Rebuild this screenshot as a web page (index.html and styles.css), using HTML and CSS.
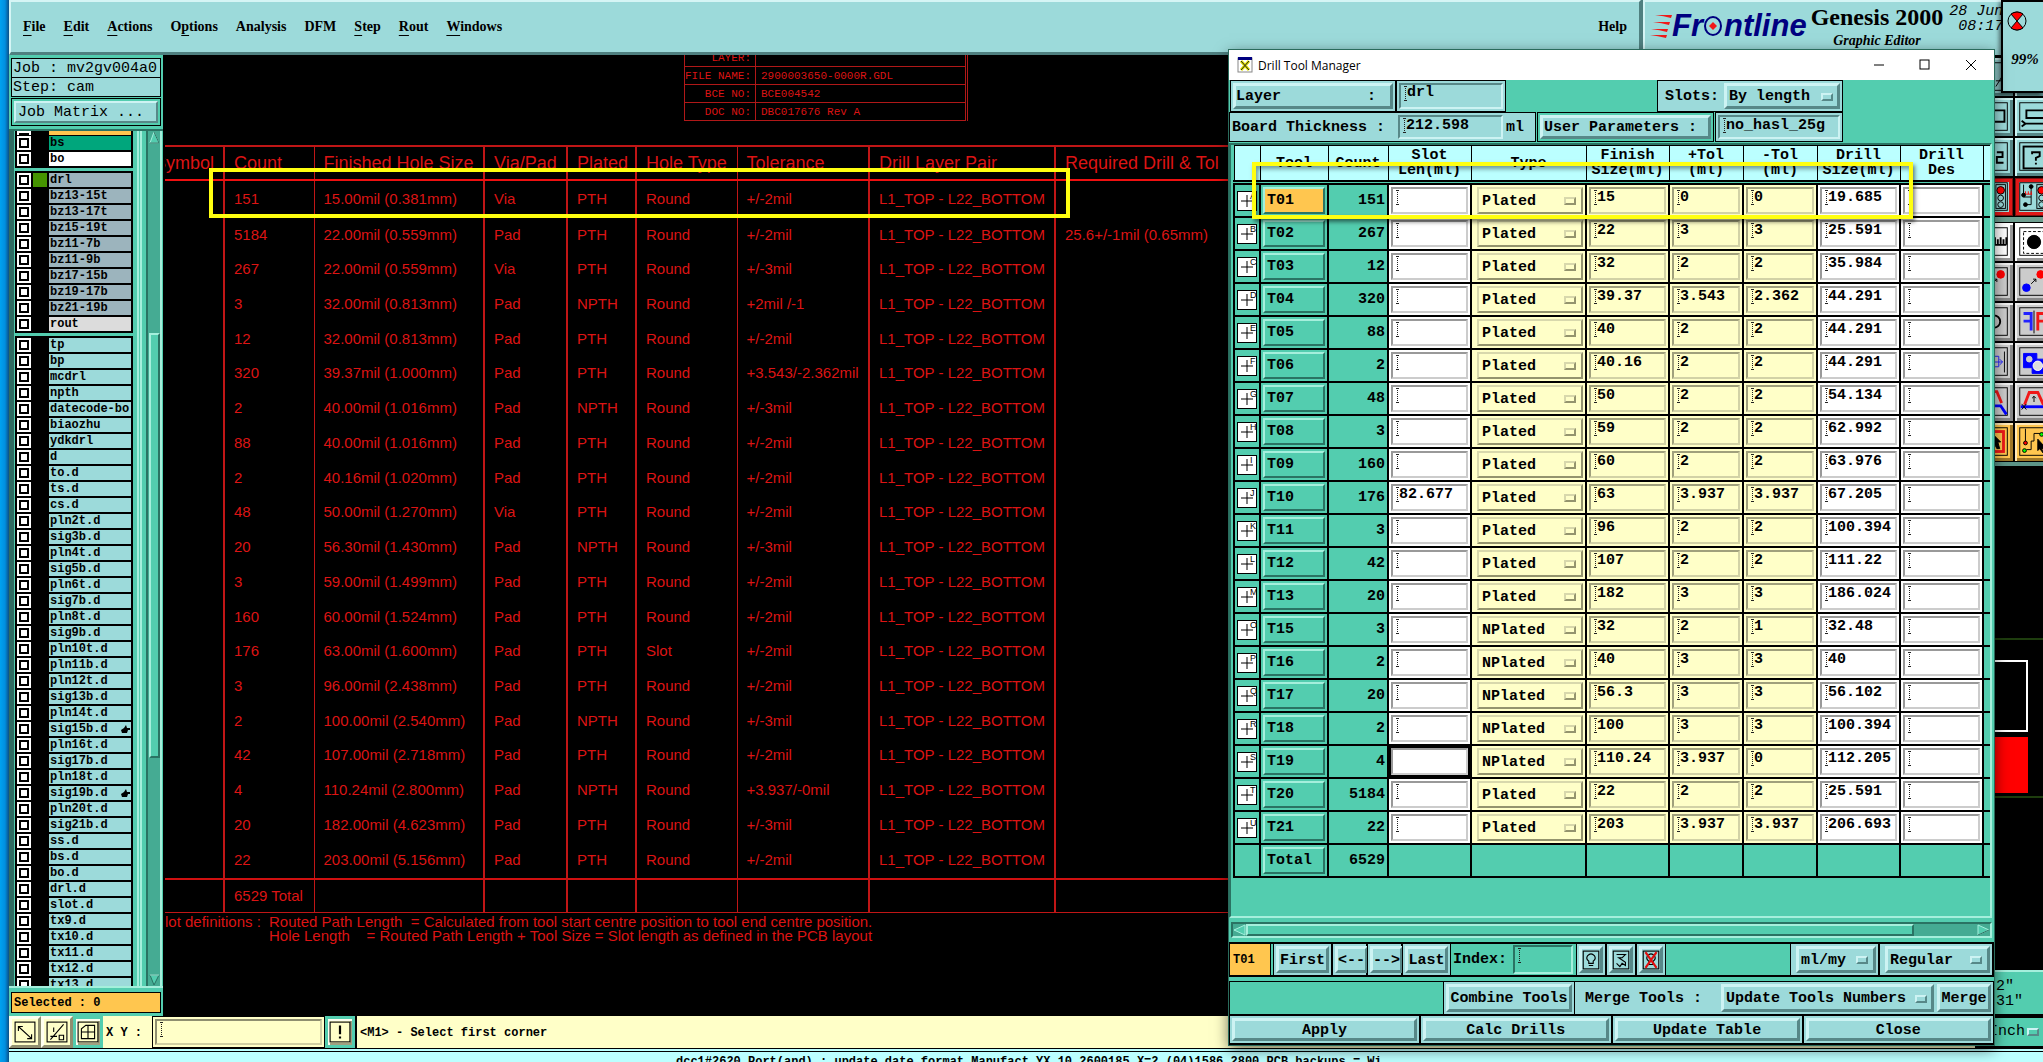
FILE: index.html
```html
<!DOCTYPE html>
<html lang="en">

<head>
    <meta charset="UTF-8">
    <meta name="viewport" content="width=device-width, initial-scale=1.0">
    <title>Genesis 2000 Graphic Editor</title>
    <link rel="stylesheet" href="styles.css">
</head>

<body>
    <div class="app">
        <header class="topbar">
            <nav class="menubar">
                <a href="#"><u>F</u>ile</a>
                <a href="#"><u>E</u>dit</a>
                <a href="#"><u>A</u>ctions</a>
                <a href="#">O<u>p</u>tions</a>
                <a href="#">Analysis</a>
                <a href="#">DFM</a>
                <a href="#"><u>S</u>tep</a>
                <a href="#"><u>R</u>out</a>
                <a href="#"><u>W</u>indows</a>
                <a href="#" class="help">Help</a>
            </nav>
            <div class="brand">
                <div class="logo">
                    <svg class="logo-stripes" width="22" height="24" viewBox="0 0 22 24">
                        <path d="M5 1H22L21 4Q14 2 5 1ZM3 8H20L19 11Q12 9 3 8ZM1 15H18L17 18Q10 16 1 15ZM0 21H17L16 24Q8 22 0 21Z" fill="#f01818" />
                    </svg>
                    <span>Fr</span>
                    <svg class="logo-o" width="21" height="22" viewBox="0 0 21 22">
                        <ellipse cx="10" cy="11" rx="8" ry="9" fill="none" stroke="#000080" stroke-width="2" />
                        <path d="M10 7L14 11L10 15L6 11Z" fill="#f01818" />
                    </svg>
                    <span>ntline</span>
                </div>
                <div class="product">
                    <strong>Genesis 2000</strong>
                    <em>Graphic Editor</em>
                </div>
                <div class="clock">28 Jun<br>08:17</div>
            </div>
        </header>

        <main class="workspace">
            <aside class="sidebar">
                <div class="job-info">Job : mv2gv004a0</div>
                <div class="job-info">Step: cam</div>
                <div class="matrix-box"><button type="button" class="btn">Job Matrix ...</button></div>
                <div class="layers">
                    <div class="layer-list" id="layerList"></div>
                    <div class="vscroll">
                        <svg width="11" height="13" viewBox="0 0 11 13"><path d="M5 1L10 12H1Z" fill="#53cdaf" stroke="#a5efdc" /><path d="M5 1L10 12H1" fill="none" stroke="#2a7363" /></svg>
                        <div class="vthumb"></div>
                        <svg width="11" height="12" viewBox="0 0 11 12"><path d="M1 1H10L5 11Z" fill="#53cdaf" stroke="#2a7363" /><path d="M1 1H10" stroke="#a5efdc" /></svg>
                    </div>
                </div>
                <div class="selected">Selected : 0</div>
            </aside>

            <section class="canvas">
                <table class="title-block">
                    <tr><th>LAYER:</th><td></td></tr>
                    <tr><th>FILE NAME:</th><td>2900003650-0000R.GDL</td></tr>
                    <tr><th>BCE NO:</th><td>BCE004542</td></tr>
                    <tr><th>DOC NO:</th><td>DBC017676 Rev A</td></tr>
                </table>

                <table class="drawing">
                    <colgroup>
                        <col class="c-sym"><col class="c-count"><col class="c-hole"><col class="c-via"><col class="c-plated">
                        <col class="c-type"><col class="c-tol"><col class="c-pair"><col>
                    </colgroup>
                    <thead>
                        <tr>
                            <th>Symbol</th><th>Count</th><th>Finished Hole Size</th><th>Via/Pad</th><th>Plated</th>
                            <th>Hole Type</th><th>Tolerance</th><th>Drill Layer Pair</th><th>Required Drill &amp; Tol</th>
                        </tr>
                    </thead>
                    <tbody id="drawingRows"></tbody>
                    <tfoot>
                        <tr><td></td><td>6529 Total</td><td></td><td></td><td></td><td></td><td></td><td></td><td></td></tr>
                    </tfoot>
                </table>
                <dl class="notes">
                    <dt>Slot definitions :</dt>
                    <dd>Routed Path Length &nbsp;= Calculated from tool start centre position to tool end centre position.</dd>
                    <dt></dt>
                    <dd>Hole Length &nbsp; &nbsp;= Routed Path Length + Tool Size = Slot length as defined in the PCB layout</dd>
                </dl>
                <div class="highlight highlight-drawing"></div>
            </section>

            <aside class="tools-col">
                <div class="tiles">
                    <button type="button" class="tile" aria-label="Zoom in"><svg viewBox="0 0 40 40"><rect x="5" y="5" width="29" height="29" /><path d="M22 30L33 12M22 24H33" /></svg></button>
                    <button type="button" class="tile" aria-label="Zoom out"><svg viewBox="0 0 40 40"><rect x="5" y="5" width="29" height="29" /></svg></button>
                    <button type="button" class="tile" aria-label="Area"><svg viewBox="0 0 40 40"><rect x="5" y="5" width="29" height="29" /><path d="M12 13H31V25H12Z" stroke-width="2" /></svg></button>
                    <button type="button" class="tile" aria-label="Path"><svg viewBox="0 0 40 40"><rect x="5" y="5" width="35" height="29" /><path d="M40 13H12V21H40M40 27H11M7 24L11 27L7 30" stroke-width="2" /></svg></button>
                    <button type="button" class="tile" aria-label="Two"><svg viewBox="0 0 40 40"><rect x="5" y="5" width="29" height="29" /><path d="M23 15H29V20H23V26H30" stroke-width="2" /></svg></button>
                    <button type="button" class="tile" aria-label="Query"><svg viewBox="0 0 40 40"><rect x="5" y="5" width="35" height="29" /><rect x="9" y="9" width="31" height="23" stroke-width="2" /><path d="M18 17V15H26V19L22 21V24M22 26V28" stroke-width="2" /></svg></button>
                    <button type="button" class="tile tile-red" aria-label="Signal"><svg viewBox="0 0 40 40"><rect x="5" y="5" width="29" height="29" /><rect x="22" y="7" width="10" height="25" /><circle cx="27" cy="13" r="4" fill="#f00" /><circle cx="27" cy="21" r="3" /><circle cx="27" cy="28" r="3" /></svg></button>
                    <button type="button" class="tile tile-red" aria-label="Net signal"><svg viewBox="0 0 40 40"><rect x="5" y="5" width="35" height="29" /><rect x="23" y="7" width="10" height="25" /><circle cx="28" cy="13" r="4" fill="#f00" /><circle cx="28" cy="21" r="3" /><circle cx="28" cy="28" r="3" /><path d="M9 7V17M17 10V28H12M17 20H9" /><path d="M11 17V14M14 17V14M17 17V14M11 17H18" stroke="#f00" /><circle cx="9" cy="18" r="2" fill="#000" /><circle cx="17" cy="9" r="2" fill="#000" /><circle cx="11" cy="28" r="2" fill="#000" /></svg></button>
                </div>
                <div class="tiles tiles-edit">
                    <button type="button" class="tile tile-white" aria-label="Ruler"><svg viewBox="0 0 40 40"><rect x="5" y="5" width="29" height="29" /><path d="M20 23H33M21 15V23M24 17V23M27 15V23M30 17V23M33 15V23" stroke-width="2" /></svg></button>
                    <button type="button" class="tile tile-white" aria-label="Pad"><svg viewBox="0 0 40 40"><rect x="5" y="5" width="35" height="29" /><rect x="9" y="9" width="24" height="23" stroke-dasharray="3 2" /><circle cx="20" cy="20" r="7" fill="#000" /></svg></button>
                    <button type="button" class="tile tile-grey" aria-label="Move"><svg viewBox="0 0 40 40"><rect x="5" y="5" width="29" height="29" /><circle cx="27" cy="12" r="4" fill="#f00" stroke="#f00" /><path d="M18 22L23 17M20 17H23V20" /></svg></button>
                    <button type="button" class="tile tile-grey" aria-label="Copy"><svg viewBox="0 0 40 40"><rect x="5" y="5" width="35" height="29" /><circle cx="12" cy="26" r="4" fill="#00f" stroke="#00f" /><circle cx="27" cy="12" r="4" fill="#f00" stroke="#f00" /><path d="M17 22L22 17M19 17H22V20" /></svg></button>
                    <button type="button" class="tile tile-grey" aria-label="Rotate"><svg viewBox="0 0 40 40"><rect x="5" y="5" width="29" height="29" /><path d="M20 13A6 6 0 0 1 20 26" stroke-width="2" /></svg></button>
                    <button type="button" class="tile tile-grey" aria-label="Mirror"><svg viewBox="0 0 40 40"><rect x="5" y="5" width="35" height="29" /><path d="M9 11H17V29M9 19H17" stroke="#22f" stroke-width="3" /><path d="M20 8V32" /><path d="M24 29V11H33V19H24" stroke="#f01818" stroke-width="3" /></svg></button>
                    <button type="button" class="tile tile-grey" aria-label="Stretch"><svg viewBox="0 0 40 40"><rect x="5" y="5" width="29" height="29" /><path d="M14 14H25V25H14ZM20 20H29M26 17L29 20L26 23" stroke="#22f" /><path d="M31 9V31" /></svg></button>
                    <button type="button" class="tile tile-grey" aria-label="Merge"><svg viewBox="0 0 40 40"><rect x="5" y="5" width="35" height="29" /><path d="M9 11H23V17H34V32H18V26H9Z" fill="#00f" stroke="#00f" /><circle cx="15" cy="17" r="3" fill="#ccc" stroke="#ccc" /><circle cx="24" cy="24" r="5" fill="#ddd" stroke="#fff" /></svg></button>
                    <button type="button" class="tile tile-grey" aria-label="Reshape"><svg viewBox="0 0 40 40"><rect x="5" y="5" width="29" height="29" /><path d="M14 25L19 9H23L28 21" stroke="#f01818" stroke-width="3" /><path d="M10 24H27L33 33" stroke="#00f" stroke-width="3" /></svg></button>
                    <button type="button" class="tile tile-grey" aria-label="Slide line"><svg viewBox="0 0 40 40"><rect x="5" y="5" width="35" height="29" /><path d="M10 23L15 10H24L30 23" stroke="#f01818" stroke-width="3" /><path d="M6 25H36" stroke="#00f" stroke-width="3" /><path d="M20 20V14M18 16L20 14L22 16M7 22L12 28M12 22L7 28" /></svg></button>
                    <button type="button" class="tile tile-orange" aria-label="Select area"><svg viewBox="0 0 40 40"><rect x="5" y="5" width="29" height="29" /><rect x="10" y="9" width="20" height="21" stroke="#f01818" stroke-width="3" /><path d="M20 13L27 20H24L26 27H23L20 21Z" fill="#000" /></svg></button>
                    <button type="button" class="tile tile-orange" aria-label="Select net"><svg viewBox="0 0 40 40"><rect x="5" y="5" width="35" height="29" /><path d="M11 6V20M12 28H17V19H20V11H27" /><circle cx="11" cy="21" r="2" fill="#f00" /><circle cx="10" cy="29" r="2" fill="#0f0" /><circle cx="28" cy="12" r="2" fill="#0f0" /><path d="M24 17L33 27H28L30 32L26 27L24 29Z" fill="#000" /></svg></button>
                </div>
                <div class="overview">
                    <svg width="80" height="160" viewBox="0 0 80 160">
                        <path d="M0 1H80M0 159H80" stroke="#3c7a1c" />
                        <rect x="-4" y="23" width="57" height="70" fill="none" stroke="#fff" stroke-width="2" />
                        <rect x="0" y="99" width="54" height="56" fill="#f00" />
                    </svg>
                </div>
                <div class="coords">2"<br>31"</div>
            </aside>
        </main>

        <footer class="command">
            <button type="button" class="cmd-tile" aria-label="Absolute"><svg viewBox="0 0 20 20"><rect x="1" y="1" width="18" height="18" /><path d="M4 5L16 16M4 9V5H8M12 16H16V12" /></svg></button>
            <button type="button" class="cmd-tile" aria-label="Angle"><svg viewBox="0 0 20 20"><rect x="1" y="1" width="18" height="18" /><path d="M4 17L16 3M4 14H10M7 6V10M12 13V17H16V13Z" /></svg></button>
            <button type="button" class="cmd-tile cmd-on" aria-label="Grid"><svg viewBox="0 0 20 20"><rect x="1" y="1" width="18" height="18" /><path d="M4 16V7L8 4H16V16ZM4 10H16M10 4V16" /></svg></button>
            <label class="xy" for="xy">X Y :</label>
            <div class="xy-box"><input class="field" id="xy" type="text"></div>
            <button type="button" class="cmd-tile cmd-on" aria-label="Alert"><svg viewBox="0 0 20 20"><rect x="1" y="1" width="18" height="18" /><path d="M10 4V12M10 14V16" stroke-width="2" /></svg></button>
            <div class="message">&lt;M1&gt; - Select first corner</div>
            <label class="units"><select aria-label="Units"><option>Inch</option></select><i class="knob"></i></label>
        </footer>
        <div class="statusline">dcc1#2620 Port(and) : update date format Manufact YX 10.2600185 X=2.(04)1586.2800 PCB backups = Wi</div>
    </div>

    <div class="meter">
        <svg width="20" height="20" viewBox="0 0 20 20"><circle cx="10" cy="10" r="9" fill="none" stroke="#000" /><path d="M10 10L4 3Q10 -1 16 3ZM10 10L4 17Q10 21 16 17Z" fill="#f00" stroke="#000" /></svg>
        <span>99%</span>
    </div>

    <div class="dialog" role="dialog" aria-labelledby="dlgTitle">
        <div class="titlebar">
            <svg width="16" height="16" viewBox="0 0 16 16"><rect x="1" y="1" width="14" height="14" fill="#fff" stroke="#888" /><rect x="1" y="0" width="14" height="3" fill="#000080" /><path d="M4 4L12 13M12 4L4 13" stroke="#e0e000" stroke-width="3" /><path d="M4 4L12 13M12 4L4 13" stroke="#222" /></svg>
            <span id="dlgTitle">Drill Tool Manager</span>
            <button type="button" aria-label="Minimize"><svg width="12" height="12" viewBox="0 0 12 12"><path d="M1 6H11" /></svg></button>
            <button type="button" aria-label="Maximize"><svg width="12" height="12" viewBox="0 0 12 12"><rect x="1" y="1" width="9" height="9" /></svg></button>
            <button type="button" aria-label="Close window"><svg width="12" height="12" viewBox="0 0 12 12"><path d="M1 1L11 11M11 1L1 11" /></svg></button>
        </div>

        <div class="params">
            <div class="cell layer-btn"><button type="button" class="btn spread"><span>Layer</span><span>:</span></button></div>
            <div class="cell layer-field"><input class="field" type="text" value="drl" aria-label="Layer"></div>
            <div class="cell slots"><label for="slots">Slots:</label>
                <span class="option"><select id="slots"><option>By length</option></select><i class="knob"></i></span>
            </div>
        </div>
        <div class="params params-2">
            <div class="cell thickness"><label for="thick">Board Thickness :</label><input class="field" id="thick" type="text" value="212.598"><span>ml</span></div>
            <div class="cell user-btn"><button type="button" class="btn">User Parameters :</button></div>
            <div class="cell user-field"><input class="field" type="text" value="no_hasl_25g" aria-label="User parameters"></div>
        </div>

        <div class="tool-frame">
            <table class="tool-table">
                <colgroup>
                    <col class="t-ico"><col class="t-tool"><col class="t-count"><col class="t-w"><col class="t-type">
                    <col class="t-w"><col class="t-n"><col class="t-n"><col class="t-w"><col class="t-w"><col>
                </colgroup>
                <thead>
                    <tr>
                        <th></th><th>Tool</th><th>Count</th><th>Slot<br>Len(ml)</th><th>Type</th><th>Finish<br>Size(ml)</th>
                        <th>+Tol<br>(ml)</th><th>-Tol<br>(ml)</th><th>Drill<br>Size(ml)</th><th>Drill<br>Des</th><th></th>
                    </tr>
                </thead>
                <tbody id="toolRows"></tbody>
                <tfoot>
                    <tr>
                        <td></td><td><button type="button" class="tool-btn">Total</button></td><td class="num">6529</td>
                        <td></td><td></td><td></td><td></td><td></td><td></td><td></td><td></td>
                    </tr>
                </tfoot>
            </table>
        </div>
        <div class="hscroll">
            <svg width="13" height="12" viewBox="0 0 13 12"><path d="M1 6L12 1V11Z" fill="#53cdaf" stroke="#a5efdc" /></svg>
            <div class="hthumb"></div>
            <svg width="13" height="12" viewBox="0 0 13 12"><path d="M12 6L1 1V11Z" fill="#53cdaf" stroke="#a5efdc" /><path d="M12 6L1 11" stroke="#2a7363" /></svg>
        </div>

        <div class="nav-row">
            <div class="current">T01</div>
            <div class="cell w-first"><button type="button" class="btn">First</button></div>
            <div class="cell w-arrow"><button type="button" class="btn">&lt;--</button></div>
            <div class="cell w-arrow"><button type="button" class="btn">--&gt;</button></div>
            <div class="cell w-last"><button type="button" class="btn">Last</button></div>
            <label for="index">Index:</label><input class="field index" id="index" type="text">
            <div class="cell w-icon"><button type="button" class="btn" aria-label="Highlight"><svg viewBox="0 0 16 18"><rect x="1" y="1" width="14" height="16" /><path d="M6 12V10Q3 8 5 5Q8 2 11 5Q13 8 10 10V12ZM6 14H10" /></svg></button></div>
            <div class="cell w-icon"><button type="button" class="btn" aria-label="Path"><svg viewBox="0 0 16 18"><rect x="1" y="1" width="14" height="16" /><path d="M4 4H12L9 7H6L12 11V14L9 12L7 15L4 12" /></svg></button></div>
            <div class="cell w-icon"><button type="button" class="btn" aria-label="Clear highlight"><svg viewBox="0 0 16 18"><rect x="1" y="1" width="14" height="16" /><path d="M6 13V10Q3 8 5 5Q8 2 11 5Q13 8 10 10V13Z" /><path d="M3 2L13 16M13 2L3 16" stroke="#e01010" stroke-width="2" /></svg></button></div>
            <div class="cell unit-opt"><span class="option"><select aria-label="Tool units"><option>ml/my</option></select><i class="knob"></i></span></div>
            <div class="cell mode-opt"><span class="option"><select aria-label="Mode"><option>Regular</option></select><i class="knob"></i></span></div>
        </div>
        <div class="merge-row">
            <div class="cell combine"><button type="button" class="btn">Combine Tools</button></div>
            <div class="cell merge"><label for="merge">Merge Tools :</label>
                <span class="option"><select id="merge"><option>Update Tools Numbers</option></select><i class="knob"></i></span>
                <button type="button" class="btn">Merge</button>
            </div>
        </div>
        <div class="action-row">
            <div class="cell"><button type="button" class="btn">Apply</button></div>
            <div class="cell"><button type="button" class="btn">Calc Drills</button></div>
            <div class="cell"><button type="button" class="btn">Update Table</button></div>
            <div class="cell"><button type="button" class="btn">Close</button></div>
        </div>
        <div class="highlight highlight-tool"></div>
    </div>

    <script src="script.js"></script>
</body>

</html>
```
FILE: styles.css
```css
* {
    box-sizing: border-box;
}

html,
body {
    height: 100%;
    margin: 0;
}

body {
    position: relative;
    overflow: hidden;
    padding-left: 9px;
    background: linear-gradient(90deg, #00a2f0 0, #008fe0 5px, #0b4f86 9px);
    font-family: "Liberation Mono", monospace;
    font-size: 15px;
    font-weight: bold;
    color: #000;
}

button,
input,
select {
    margin: 0;
    padding: 0;
    border: 0;
    border-radius: 0;
    outline: 0;
    background: none;
    font: inherit;
    color: inherit;
}

select {
    appearance: none;
    flex: 1;
    min-width: 0;
}

.app {
    display: flex;
    flex-direction: column;
    height: 100%;
    overflow: hidden;
    background: #000;
}

/* top bar */
.topbar {
    display: flex;
    height: 55px;
    background: #4f8080;
}

.menubar {
    flex: 1;
    display: flex;
    align-items: center;
    gap: 18px;
    padding: 0 12px;
    border: 2px solid;
    border-color: #d5f5f5 #4f8080 #4f8080 #d5f5f5;
    border-bottom-width: 3px;
    background: #9cdada;
}

.menubar a {
    color: #000;
    text-decoration: none;
    font-family: "Liberation Serif", serif;
    font-size: 14px;
}

.menubar u {
    text-underline-offset: 4px;
}

.menubar .help {
    margin-left: auto;
}

.brand {
    display: flex;
    width: 400px;
    padding: 2px 0 0 5px;
    gap: 4px;
    margin-left: 2px;
    border-left: 2px solid #d5f5f5;
    border-top: 2px solid #d5f5f5;
    background: #9cdada;
    white-space: nowrap;
}

.logo {
    display: flex;
    align-items: center;
    height: 44px;
    color: #000080;
    font: italic bold 31px "Liberation Sans", sans-serif;
}

.product {
    display: flex;
    flex-direction: column;
    align-items: center;
    font-family: "Liberation Serif", serif;
}

.product strong {
    font-size: 24px;
    line-height: 26px;
}

.product em {
    font-size: 14px;
    line-height: 22px;
}

.clock {
    margin-left: 2px;
    font-style: italic;
    font-weight: normal;
    line-height: 15px;
    text-align: right;
}

.meter {
    position: absolute;
    top: 0;
    right: 0;
    width: 42px;
    height: 93px;
    display: flex;
    flex-direction: column;
    align-items: center;
    gap: 20px;
    padding: 9px 12px 0 0;
    border: solid #000;
    border-width: 2px 0 2px 2px;
    background: #9cdada;
    box-shadow: -2px 2px 4px rgba(0, 0, 0, 0.5);
    font: italic bold 15px "Liberation Serif", serif;
}

.meter span {
    margin-left: 16px;
}

/* bevelled controls */
.btn,
.option {
    display: flex;
    align-items: center;
    justify-content: center;
    padding-top: 1px;
    border: 3px solid;
    border-color: #cdf3f3 #578888 #578888 #cdf3f3;
    background: #9cdada;
    white-space: nowrap;
}

.btn svg {
    width: 18px;
    height: 20px;
    fill: none;
    stroke: #000;
}

.knob {
    flex: none;
    width: 12px;
    height: 8px;
    border: 2px solid;
    border-color: #cdf3f3 #578888 #578888 #cdf3f3;
}

.field {
    min-width: 0;
    padding: 0 0 7px 6px;
    border: 2px solid;
    border-color: #578888 #cdf3f3 #cdf3f3 #578888;
    /* I-beam cursor mark */
    background:
        linear-gradient(#222, #222) 3px 1px / 3px 1px no-repeat,
        linear-gradient(#222, #222) 3px 15px / 3px 1px no-repeat,
        repeating-linear-gradient(#222 0 1px, transparent 1px 2px) 4px 1px / 1px 15px no-repeat;
}

.cell {
    display: flex;
    padding: 2px;
    border: 1px solid #000;
    background: #9cdada;
}

.cell > .btn,
.cell > .option {
    flex: 1;
}

/* workspace */
.workspace {
    flex: 1;
    min-height: 0;
    display: flex;
}

.sidebar {
    display: flex;
    flex-direction: column;
    width: 154px;
    padding-top: 3px;
    background: #53cdaf;
}

.job-info {
    height: 20px;
    margin: 0 2px -1px;
    padding-left: 1px;
    border: 1px solid #000;
    background: #9cdada;
    line-height: 19px;
    font-weight: normal;
    white-space: nowrap;
}

.matrix-box {
    display: flex;
    height: 28px;
    margin: 2px 2px 3px;
    padding: 2px;
    border: 1px solid #000;
}

.matrix-box .btn {
    flex: 1;
    justify-content: flex-start;
    padding-left: 2px;
    border-width: 2px;
    font-weight: normal;
}

.layers {
    flex: 1;
    min-height: 0;
    display: flex;
    justify-content: space-between;
    border-top: 2px solid #2a7363;
    border-bottom: 2px solid #a5efdc;
}

.layer-list {
    width: 133px;
    overflow: hidden;
    padding-left: 1px;
    padding-right: 4px;
    border-left: 5px solid #2f6b62;
    border-right: 5px double #a5efdc;
}

.layer-group {
    margin-bottom: 3px;
    padding: 1px 2px 1px 2px;
    background: #000;
}

.layer-group:first-child {
    padding-top: 0;
}

.layer-row {
    display: flex;
    align-items: flex-start;
    height: 16px;
    padding-top: 1px;
}

/* row scrolled half out of view */
.layer-row.cut {
    height: 4px;
    padding-top: 0;
    overflow: hidden;
}

.layer-row input {
    appearance: none;
    width: 14px;
    height: 14px;
    padding: 2px;
    border: 2px solid #fff;
    background: #fff content-box;
    box-shadow: inset 0 0 0 2px #000;
}

.layer-row .swatch {
    width: 14px;
    height: 14px;
    margin: 0 2px;
}

.layer-row .swatch.on {
    background: #459400;
}

.layer-row label {
    flex: 1;
    display: flex;
    justify-content: space-between;
    height: 14px;
    padding: 0 1px;
    font-size: 12px;
    line-height: 14px;
    background: #9cdada;
    white-space: nowrap;
}

.layer-row label.orange { background: #ffc64f; }
.layer-row label.green { background: #00a67c; }
.layer-row label.white { background: #fff; }
.layer-row label.steel { background: #9cb4bd; }
.layer-row label.light { background: #dcdcdc; }

.vscroll {
    display: flex;
    flex-direction: column;
    align-items: center;
    width: 16px;
    margin-right: 1px;
    border-left: 2px solid #2a7363;
    border-right: 2px solid #a5efdc;
    background: #45ab93;
}

.vthumb {
    flex: none;
    width: 11px;
    height: 425px;
    margin-top: 189px;
    margin-bottom: auto;
    border: 2px solid;
    border-color: #a5efdc #2a7363 #2a7363 #a5efdc;
    background: #53cdaf;
}

.selected {
    height: 21px;
    margin: 4px 2px 3px;
    padding-left: 2px;
    border: 1px solid #000;
    background: #ffc64f;
    font-size: 12px;
    line-height: 20px;
}

/* drawing canvas */
.canvas {
    position: relative;
    flex: 1;
    min-width: 0;
    margin-left: 2px;
    overflow: hidden;
    background: #000;
    color: #dc1414;
    font-family: "Liberation Sans", sans-serif;
    font-weight: normal;
}

.canvas th {
    font-weight: normal;
    text-align: left;
}

.title-block {
    width: 284px;
    margin: -7px 0 0 519px;
    border-collapse: collapse;
    border-right: 3px double #b01818;
    font: 11px "Liberation Mono", monospace;
}

.title-block th,
.title-block td {
    height: 18px;
    padding: 0 5px;
    border: 1px solid #b01818;
    line-height: 16px;
}

.title-block th {
    width: 64px;
    padding: 0 4px 0 0;
    text-align: right;
    white-space: nowrap;
}

.drawing {
    width: calc(100% + 22px);
    height: 768px;
    margin: 24px 0 0 -22px;
    table-layout: fixed;
    border-collapse: collapse;
    white-space: nowrap;
}

.drawing th,
.drawing td {
    padding: 0 0 0 9px;
    border-left: 2px solid #c01616;
}

.drawing th {
    height: 34px;
    border-top: 2px solid #c01616;
    border-bottom: 2px solid #f01010;
    font-size: 18px;
}

.drawing th:nth-child(3),
.drawing td:nth-child(3),
.drawing th:nth-child(7),
.drawing td:nth-child(7) {
    border-left-width: 1px;
}

.drawing tfoot td {
    height: 34px;
    border-top: 2px solid #d01010;
    border-bottom: 1px solid #c01616;
}

.c-sym { width: 80px; }
.c-count { width: 90px; }
.c-hole { width: 170px; }
.c-via { width: 83px; }
.c-plated { width: 69px; }
.c-type { width: 101px; }
.c-tol { width: 132px; }
.c-pair { width: 186px; }

.notes {
    display: grid;
    grid-template-columns: 114px auto;
    margin: 2px 0 0 -10px;
    line-height: 14px;
    white-space: nowrap;
}

.notes dd {
    margin: 0;
}

.highlight {
    position: absolute;
    border: 4px solid #ffff10;
    pointer-events: none;
}

.highlight-drawing {
    top: 113px;
    left: 44px;
    width: 861px;
    height: 50px;
}

/* right hand tool tiles, the last column runs past the window edge */
.tools-col {
    flex: none;
    display: flex;
    flex-direction: column;
    width: 80px;
    margin-right: -11px;
    padding-top: 2px;
}

.tiles {
    display: grid;
    grid-template-columns: 40px 40px;
}

.tiles-edit {
    margin-bottom: auto;
    border-top: 5px solid #6f9f90;
    border-bottom: 4px solid #5c9488;
}

.tile {
    height: 40px;
    border: 1px solid #000;
    background: #9cdada;
    box-shadow: inset 2px 2px 0 #cdf3f3, inset -3px -3px 0 #578888;
}

.tile svg {
    display: block;
    width: 38px;
    height: 38px;
    fill: none;
    stroke: #000;
}

.tile-red {
    box-shadow: inset 0 0 0 1px #7a1010, inset 0 0 0 4px #e01818;
}

.tile-white {
    background: #fff;
    box-shadow: inset 2px 2px 0 #fff, inset -3px -3px 0 #999;
}

.tile-grey {
    background: #ccc;
    box-shadow: inset 2px 2px 0 #eee, inset -3px -3px 0 #888;
}

.tile-orange {
    background: #ffc64f;
    box-shadow: inset 2px 2px 0 #ffe8b8, inset -3px -3px 0 #a07828;
}

.overview {
    margin-bottom: auto;
    height: 160px;
}

.coords {
    height: 46px;
    padding: 7px 0 0 22px;
    border-top: 2px solid #a5efdc;
    border-bottom: 2px solid #000;
    background: #53cdaf;
    line-height: 15px;
    font-weight: normal;
}

/* command line */
.command {
    display: flex;
    height: 32px;
    background: #ffffc8;
    font-size: 12px;
    line-height: 34px;
}

.cmd-tile {
    width: 32px;
    padding: 1px;
    border: 3px solid;
    border-color: #fffff0 #8f8f70 #8f8f70 #fffff0;
    background: #ffffc8;
    box-shadow: 1px 0 0 #000;
}

.cmd-tile svg {
    display: block;
    width: 22px;
    height: 22px;
    margin: auto;
    fill: none;
    stroke: #000;
}

.cmd-on {
    width: 30px;
    border-color: #53cdaf;
    box-shadow: inset 2px 2px 0 #fffff0, inset -2px -2px 0 #a0a080;
}

.xy {
    width: 49px;
    padding-left: 3px;
}

.xy-box {
    display: flex;
    width: 173px;
    padding: 2px;
    border: 1px solid #000;
}

.xy-box .field {
    flex: 1;
    border-color: #8f8f70 #d0d0a4 #d0d0a4 #8f8f70;
}

.message {
    flex: 1;
    padding-left: 3px;
    border-left: 2px solid #000;
}

.units {
    display: flex;
    align-items: center;
    width: 79px;
    margin-right: -11px;
    padding-left: 12px;
    padding-right: 13px;
    border: 2px solid #000;
    background: #53cdaf;
    font-size: 15px;
    font-weight: normal;
}

.statusline {
    height: 14px;
    overflow: hidden;
    padding-left: 667px;
    border-top: 4px double #000;
    background: #bff;
    font-size: 12px;
    line-height: 20px;
    white-space: nowrap;
}

/* drill tool manager window */
.dialog {
    position: absolute;
    top: 50px;
    right: 49px;
    width: 765px;
    background: #53cdaf;
    box-shadow: 0 0 0 1px #2a6b5c, 0 4px 14px rgba(0, 0, 0, 0.6);
}

.titlebar {
    display: flex;
    align-items: center;
    height: 30px;
    padding-left: 8px;
    background: #fff;
    font: 12px "Open Sans", sans-serif;
}

.titlebar span {
    flex: 1;
    padding-left: 5px;
}

.titlebar button {
    display: flex;
    justify-content: center;
    align-items: center;
    width: 46px;
    height: 30px;
}

.titlebar button svg {
    fill: none;
    stroke: #000;
}

.params {
    display: flex;
    height: 32px;
    padding-left: 1px;
}

.params-2 {
    height: 30px;
    margin-bottom: 1px;
    gap: 1px;
    padding-left: 0;
}

.params-2 .field {
    padding-bottom: 3px;
}

.layer-btn { width: 166px; }
.layer-field { width: 110px; }
.layer-field .field,
.user-field .field { flex: 1; }

.spread {
    justify-content: space-between;
    padding-left: 0;
    padding-right: 14px;
}

.slots {
    width: 186px;
    margin-left: 151px;
}

.cell label {
    align-self: center;
    padding: 0 5px;
}

.slots .option {
    padding-left: 2px;
    padding-right: 4px;
}

.params .thickness {
    width: 307px;
}

.thickness label {
    width: 166px;
    padding: 0;
}

.thickness .field {
    width: 105px;
}

.thickness span {
    align-self: center;
    padding-left: 3px;
}

.user-btn {
    width: 177px;
    background: #53cdaf;
}

.user-btn .btn {
    justify-content: flex-start;
    padding-left: 1px;
}

.user-field { width: 128px; }

.tool-frame {
    height: 775px;
    margin: 0 2px 0 0;
    padding-left: 2px;
    border: 2px solid;
    border-color: #2a7363 #a5efdc #a5efdc #2a7363;
    overflow: hidden;
}

.tool-table {
    width: 100%;
    table-layout: fixed;
    border-collapse: collapse;
}

.t-ico { width: 26px; }
.t-tool { width: 68px; }
.t-count { width: 60px; }
.t-w { width: 83px; }
.t-n { width: 74px; }
.t-type { width: 115px; }

.tool-table th {
    height: 37px;
    padding: 0;
    border: 1px solid #000;
    border-bottom: 5px double #000;
    background: #bff padding-box;
    line-height: 15px;
    font-weight: bold;
}

.tool-table td {
    height: 33px;
    padding: 2px;
    border: 2px solid #000;
}

.tool-table td:last-child,
.tool-table th:last-child {
    border-right: 0;
}

.tool-table .num {
    text-align: right;
}

.tool-table .cream { background: #ffffc8; }
.tool-table .white { background: #fff; }
.tool-table .focus { background: #000; }
.tool-table .focus .field { background: #fff; }

.tool-table .field {
    display: block;
    width: 100%;
    height: 27px;
    border-color: #999 #ccc #ccc #999;
}

.tool-table .cream .field {
    border-color: #a0a07c #d2d2a6 #d2d2a6 #a0a07c;
}

.tool-table .option {
    height: 27px;
    margin-left: 3px;
    padding: 1px 5px 0 3px;
    border-width: 2px;
    border-color: #d8d8ac #94946e #94946e #d8d8ac;
    background: #ffffc8;
}

.tool-table .knob {
    border-color: #d8d8ac #94946e #94946e #d8d8ac;
}

.tool-btn {
    width: 100%;
    height: 27px;
    padding-left: 2px;
    border: 2px solid;
    border-color: #a5efdc #2a7363 #2a7363 #a5efdc;
    text-align: left;
}

.tool-btn.active {
    background: #ffc64f;
}

.symbol {
    display: block;
    width: 20px;
    height: 20px;
    margin: auto;
    font: 9px "Liberation Sans", sans-serif;
}

.hscroll {
    display: flex;
    align-items: center;
    height: 16px;
    margin: 4px 2px 4px;
    border: 2px solid;
    border-color: #2a7363 #a5efdc #a5efdc #2a7363;
    background: #45ab93;
}

.hthumb {
    width: 668px;
    height: 12px;
    margin-right: auto;
    border: 2px solid;
    border-color: #a5efdc #2a7363 #2a7363 #a5efdc;
    background: #53cdaf;
}

.nav-row {
    display: flex;
    height: 35px;
    border: 1px solid #000;
    border-width: 2px 1px;
}

.nav-row label {
    align-self: center;
    margin: 0 6px 0 2px;
}

.nav-row .cell {
    border-width: 0 1px;
}

.nav-row .current {
    width: 41px;
    margin-right: 2px;
    padding-left: 3px;
    border-right: 1px solid #000;
    background: #ffc64f;
    font-size: 12px;
    line-height: 32px;
}

.w-first { width: 59px; }
.w-arrow { width: 35px; }
.w-last { width: 49px; }
.w-icon { width: 30px; }

.index {
    width: 60px;
    margin: 1px 3px 1px 0;
    border-color: #2a7363 #a5efdc #a5efdc #2a7363;
}

.unit-opt {
    width: 89px;
    margin-left: auto;
}

.nav-row .unit-opt,
.nav-row .mode-opt {
    padding-left: 5px;
}

.mode-opt { width: 114px; }

.unit-opt .option,
.mode-opt .option {
    padding: 1px 5px 0 2px;
}

.merge-row {
    display: flex;
    justify-content: flex-end;
    height: 34px;
    margin-top: 4px;
    border: 1px solid #000;
}

.merge-row .cell {
    border-width: 0 0 0 1px;
}

.combine { width: 131px; }
.merge { width: 419px; }

.merge label {
    flex: 1;
    padding: 0 0 0 8px;
}

.merge .option {
    flex: none;
    width: 213px;
    margin-right: 3px;
    padding: 1px 4px 0 2px;
}

.merge .btn {
    flex: none;
    width: 54px;
}

.action-row {
    display: flex;
    height: 30px;
    border-bottom: 2px solid #000;
}

.action-row .cell {
    flex: 1;
    border-bottom: 0;
}

.highlight-tool {
    top: 112px;
    left: 23px;
    width: 661px;
    height: 57px;
    box-shadow: 2px 3px 4px rgba(0, 0, 0, 0.5), inset 2px 3px 4px rgba(0, 0, 0, 0.4);
}
```
FILE: script.js
```js
// layer list: name, colour
const groups = [
    [['ss', 'orange cut'], ['bs', 'green'], ['bo', 'white']],
    [['drl', 'steel'], ['bz13-15t', 'steel'], ['bz13-17t', 'steel'], ['bz15-19t', 'steel'], ['bz11-7b', 'steel'],
     ['bz11-9b', 'steel'], ['bz17-15b', 'steel'], ['bz19-17b', 'steel'], ['bz21-19b', 'steel'], ['rout', 'light']],
    ('tp bp mcdrl npth datecode-bo biaozhu ydkdrl d to.d ts.d cs.d pln2t.d sig3b.d pln4t.d sig5b.d pln6t.d sig7b.d ' +
     'pln8t.d sig9b.d pln10t.d pln11b.d pln12t.d sig13b.d pln14t.d sig15b.d pln16t.d sig17b.d pln18t.d sig19b.d ' +
     'pln20t.d sig21b.d ss.d bs.d bo.d drl.d slot.d tx9.d tx10.d tx11.d tx12.d tx13.d').split(' ').map(n => [n, ''])
];
const marked = ['sig15b.d', 'sig19b.d'];

document.getElementById('layerList').innerHTML = groups.map((rows, g) =>
    '<div class="layer-group">' + rows.map(([name, cls]) => {
        const cut = cls.includes('cut');
        const hand = marked.includes(name) ? '<svg width="9" height="14" viewBox="0 0 9 14"><path d="M0 8L3 6L5 3L6 6H9V8H7L6 11H1Z"/></svg>' : '';
        const id = 'layer-' + g + '-' + name;
        return `<div class="layer-row${cut ? ' cut' : ''}"><input type="checkbox" id="${id}">` +
            `<span class="swatch${name === 'drl' ? ' on' : ''}"></span>` +
            `<label for="${id}" class="${cls.replace(' cut', '')}">${cut ? '' : name}${hand}</label></div>`;
    }).join('') + '</div>').join('');

// drill chart on the drawing
const pair = 'L1_TOP - L22_BOTTOM';
const chart = [
    ['151', '15.00mil (0.381mm)', 'Via', 'PTH', 'Round', '+/-2mil'],
    ['5184', '22.00mil (0.559mm)', 'Pad', 'PTH', 'Round', '+/-2mil', '25.6+/-1mil (0.65mm)'],
    ['267', '22.00mil (0.559mm)', 'Via', 'PTH', 'Round', '+/-3mil'],
    ['3', '32.00mil (0.813mm)', 'Pad', 'NPTH', 'Round', '+2mil /-1'],
    ['12', '32.00mil (0.813mm)', 'Pad', 'PTH', 'Round', '+/-2mil'],
    ['320', '39.37mil (1.000mm)', 'Pad', 'PTH', 'Round', '+3.543/-2.362mil'],
    ['2', '40.00mil (1.016mm)', 'Pad', 'NPTH', 'Round', '+/-3mil'],
    ['88', '40.00mil (1.016mm)', 'Pad', 'PTH', 'Round', '+/-2mil'],
    ['2', '40.16mil (1.020mm)', 'Pad', 'PTH', 'Round', '+/-2mil'],
    ['48', '50.00mil (1.270mm)', 'Via', 'PTH', 'Round', '+/-2mil'],
    ['20', '56.30mil (1.430mm)', 'Pad', 'NPTH', 'Round', '+/-3mil'],
    ['3', '59.00mil (1.499mm)', 'Pad', 'PTH', 'Round', '+/-2mil'],
    ['160', '60.00mil (1.524mm)', 'Pad', 'PTH', 'Round', '+/-2mil'],
    ['176', '63.00mil (1.600mm)', 'Pad', 'PTH', 'Slot', '+/-2mil'],
    ['3', '96.00mil (2.438mm)', 'Pad', 'PTH', 'Round', '+/-2mil'],
    ['2', '100.00mil (2.540mm)', 'Pad', 'NPTH', 'Round', '+/-3mil'],
    ['42', '107.00mil (2.718mm)', 'Pad', 'PTH', 'Round', '+/-2mil'],
    ['4', '110.24mil (2.800mm)', 'Pad', 'NPTH', 'Round', '+3.937/-0mil'],
    ['20', '182.00mil (4.623mm)', 'Pad', 'PTH', 'Round', '+/-3mil'],
    ['22', '203.00mil (5.156mm)', 'Pad', 'PTH', 'Round', '+/-2mil']
];

document.getElementById('drawingRows').innerHTML = chart.map(r =>
    '<tr>' + ['', ...r.slice(0, 6), pair, r[6] || ''].map(c => `<td>${c}</td>`).join('') + '</tr>').join('');

// tool table: number, count, slot, plated, finish, +tol, -tol, drill
const tools = [
    [1, 151, '', 1, '15', '0', '0', '19.685'],
    [2, 267, '', 1, '22', '3', '3', '25.591'],
    [3, 12, '', 1, '32', '2', '2', '35.984'],
    [4, 320, '', 1, '39.37', '3.543', '2.362', '44.291'],
    [5, 88, '', 1, '40', '2', '2', '44.291'],
    [6, 2, '', 1, '40.16', '2', '2', '44.291'],
    [7, 48, '', 1, '50', '2', '2', '54.134'],
    [8, 3, '', 1, '59', '2', '2', '62.992'],
    [9, 160, '', 1, '60', '2', '2', '63.976'],
    [10, 176, '82.677', 1, '63', '3.937', '3.937', '67.205'],
    [11, 3, '', 1, '96', '2', '2', '100.394'],
    [12, 42, '', 1, '107', '2', '2', '111.22'],
    [13, 20, '', 1, '182', '3', '3', '186.024'],
    [15, 3, '', 0, '32', '2', '1', '32.48'],
    [16, 2, '', 0, '40', '3', '3', '40'],
    [17, 20, '', 0, '56.3', '3', '3', '56.102'],
    [18, 2, '', 0, '100', '3', '3', '100.394'],
    [19, 4, '', 0, '110.24', '3.937', '0', '112.205'],
    [20, 5184, '', 1, '22', '2', '2', '25.591'],
    [21, 22, '', 1, '203', '3.937', '3.937', '206.693']
];

const field = (cls, value, label) =>
    `<td class="${cls}"><input class="field" type="text" value="${value}" aria-label="${label}"></td>`;

document.getElementById('toolRows').innerHTML = tools.map(([n, count, slot, plated, fin, plus, minus, drill]) => {
    const name = 'T' + String(n).padStart(2, '0');
    const letter = String.fromCharCode(64 + n);
    return `<tr>
        <td><svg class="symbol" viewBox="0 0 20 20"><rect x="0.5" y="0.5" width="19" height="19" fill="#fff" stroke="#000"/>
            <path d="M10 4V16M4 10H16" stroke="#000"/><text x="13" y="8">${letter}</text></svg></td>
        <td><button type="button" class="tool-btn${n === 1 ? ' active' : ''}">${name}</button></td>
        <td class="num">${count}</td>
        ${field(n === 19 ? 'white focus' : 'white', slot, name + ' slot length')}
        <td class="cream"><span class="option"><select aria-label="${name} type"><option${plated ? ' selected' : ''}>Plated</option><option${plated ? '' : ' selected'}>NPlated</option></select><i class="knob"></i></span></td>
        ${field('cream', fin, name + ' finish size')}
        ${field('cream', plus, name + ' plus tolerance')}
        ${field('cream', minus, name + ' minus tolerance')}
        ${field('white', drill, name + ' drill size')}
        ${field('white', '', name + ' drill designation')}
        <td></td></tr>`;
}).join('');
```
